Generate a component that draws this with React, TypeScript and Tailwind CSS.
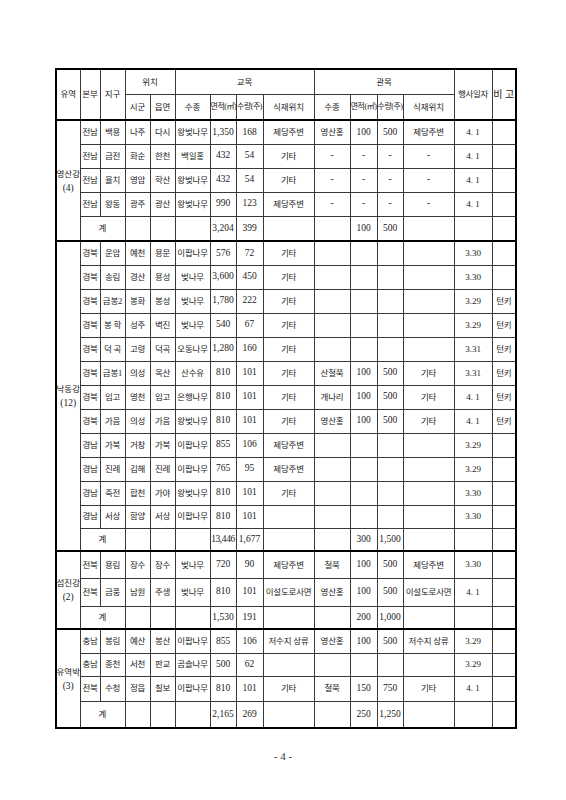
import React from 'react';

type Row = { c: string[]; h: number; total?: boolean };
type Group = { name: string; count: string; rows: Row[] };

const E = '';

const groups: Group[] = [
    {
        name: '영산강',
        count: '(4)',
        rows: [
            { h: 24, c: ['전남', '백용', '나주', '다시', '왕벚나무', '1,350', '168', '제당주변', '영산홍', '100', '500', '제당주변', '4. 1', E] },
            { h: 24, c: ['전남', '금전', '화순', '한천', '백일홍', '432', '54', '기타', '-', '-', '-', '-', '4. 1', E] },
            { h: 24, c: ['전남', '율치', '영암', '학산', '왕벚나무', '432', '54', '기타', '-', '-', '-', '-', '4. 1', E] },
            { h: 24, c: ['전남', '왕동', '광주', '광산', '왕벚나무', '990', '123', '제당주변', '-', '-', '-', '-', '4. 1', E] },
            { h: 25, total: true, c: ['계', E, E, E, '3,204', '399', E, E, '100', '500', E, E, E] },
        ],
    },
    {
        name: '낙동강',
        count: '(12)',
        rows: [
            { h: 24, c: ['경북', '운암', '예천', '용문', '이팝나무', '576', '72', '기타', E, E, E, E, '3.30', E] },
            { h: 24, c: ['경북', '송림', '경산', '용성', '벚나무', '3,600', '450', '기타', E, E, E, E, '3.30', E] },
            { h: 24, c: ['경북', '금봉2', '봉화', '봉성', '벚나무', '1,780', '222', '기타', E, E, E, E, '3.29', '턴키'] },
            { h: 24, c: ['경북', '봉 학', '성주', '벽진', '벚나무', '540', '67', '기타', E, E, E, E, '3.29', '턴키'] },
            { h: 24, c: ['경북', '덕 곡', '고령', '덕곡', '오동나무', '1,280', '160', '기타', E, E, E, E, '3.31', '턴키'] },
            { h: 24, c: ['경북', '금봉1', '의성', '옥산', '산수유', '810', '101', '기타', '산철쭉', '100', '500', '기타', '3.31', '턴키'] },
            { h: 24, c: ['경북', '임고', '영천', '임고', '은행나무', '810', '101', '기타', '개나리', '100', '500', '기타', '4. 1', '턴키'] },
            { h: 24, c: ['경북', '가음', '의성', '가음', '왕벚나무', '810', '101', '기타', '영산홍', '100', '500', '기타', '4. 1', '턴키'] },
            { h: 24, c: ['경남', '가북', '거창', '가북', '이팝나무', '855', '106', '제당주변', E, E, E, E, '3.29', E] },
            { h: 24, c: ['경남', '진례', '김해', '진례', '이팝나무', '765', '95', '제당주변', E, E, E, E, '3.29', E] },
            { h: 24, c: ['경남', '죽전', '합천', '가야', '왕벚나무', '810', '101', '기타', E, E, E, E, '3.30', E] },
            { h: 23, c: ['경남', '서상', '함양', '서상', '이팝나무', '810', '101', E, E, E, E, E, '3.30', E] },
            { h: 23, total: true, c: ['계', E, E, E, '13,446', '1,677', E, E, '300', '1,500', E, E, E] },
        ],
    },
    {
        name: '섬진강',
        count: '(2)',
        rows: [
            { h: 27, c: ['전북', '용림', '장수', '장수', '벚나무', '720', '90', '제당주변', '철쭉', '100', '500', '제당주변', '3.30', E] },
            { h: 28, c: ['전북', '금풍', '남원', '주생', '벚나무', '810', '101', '이설도로사면', '영산홍', '100', '500', '이설도로사면', '4. 1', E] },
            { h: 23, total: true, c: ['계', E, E, E, '1,530', '191', E, E, '200', '1,000', E, E, E] },
        ],
    },
    {
        name: '유역박',
        count: '(3)',
        rows: [
            { h: 24, c: ['충남', '봉림', '예산', '봉산', '이팝나무', '855', '106', '저수지 상류', '영산홍', '100', '500', '저수지 상류', '3.29', E] },
            { h: 23, c: ['충남', '종천', '서천', '판교', '곰솔나무', '500', '62', E, E, E, E, E, '3.29', E] },
            { h: 25, c: ['전북', '수청', '정읍', '칠보', '이팝나무', '810', '101', '기타', '철쭉', '150', '750', '기타', '4. 1', E] },
            { h: 27, total: true, c: ['계', E, E, E, '2,165', '269', E, E, '250', '1,250', E, E, E] },
        ],
    },
];

const widths = [24, 20, 25, 25, 25, 35, 26, 27, 51, 36, 27, 26, 51, 38, 24];

const cell = 'border border-[#3a3a3a] text-center align-middle p-0 whitespace-nowrap overflow-visible';

// Hangul text is set smaller than the serif figures, as in the printed page
const size = (t: string) =>
    /[가-힣]/.test(t) ? ' text-[8.5px] tracking-[-0.2px]' : t.length > 5 ? ' text-[9.5px] tracking-[-0.4px]' : ' text-[9.5px]';

// columns whose left rule is lighter (지구, 수종)
const lightLeft = (col: number) => (col === 2 || col === 5 ? ' border-l-[#8a8a8a]' : '');

const App: React.FC = () => {
    return (
        <div
            className="w-[566px] h-[800px] bg-white text-[#222] leading-none"
            style={{ fontFamily: '"Liberation Serif", "Noto Sans CJK KR", serif' }}
        >
            <div className="pt-[68px] pl-[55px]">
                <table className="table-fixed border-collapse border-2 border-black w-[460px]">
                    <colgroup>
                        {widths.map((w, i) => (
                            <col key={i} style={{ width: w }} />
                        ))}
                    </colgroup>
                    <thead>
                        <tr className="h-[25px]">
                            <th rowSpan={2} className={`${cell} font-normal text-[8.5px]`}>유역</th>
                            <th rowSpan={2} className={`${cell} font-normal text-[8.5px]`}>본부</th>
                            <th rowSpan={2} className={`${cell} font-normal text-[8.5px] border-l-[#8a8a8a]`}>지구</th>
                            <th colSpan={2} className={`${cell} font-normal text-[8.5px]`}>위치</th>
                            <th colSpan={4} className={`${cell} font-normal text-[8.5px] border-l-[#8a8a8a]`}>교목</th>
                            <th colSpan={4} className={`${cell} font-normal text-[8.5px]`}>관목</th>
                            <th rowSpan={2} className={`${cell} font-normal text-[8.5px] tracking-[-0.3px] border-b-2 border-b-black`}>
                                행사일자
                            </th>
                            <th rowSpan={2} className={`${cell} font-normal text-[10px] border-b-2 border-b-black`}>비 고</th>
                        </tr>
                        <tr className="h-[26px]">
                            {['시군', '읍면', '수종', '면적(㎡)', '수량(주)', '식재위치', '수종', '면적(㎡)', '수량(주)', '식재위치'].map((t, i) => (
                                <th
                                    key={i}
                                    className={`${cell} font-normal border-b-2 border-b-black${i === 2 ? ' border-l-[#8a8a8a]' : ''}${
                                        t.length > 4 ? ' text-[8px] tracking-[-0.5px]' : ' text-[8.5px]'
                                    }`}
                                >
                                    {t}
                                </th>
                            ))}
                        </tr>
                    </thead>
                    <tbody>
                        {groups.map((g) =>
                            g.rows.map((r, ri) => (
                                <tr key={g.name + ri} style={{ height: r.h }}>
                                    {ri === 0 && (
                                        <td
                                            rowSpan={g.rows.length}
                                            className={`${cell} text-[8.5px] border-t-2 border-t-black leading-[14px]`}
                                        >
                                            <div className="-mx-[2px]">{g.name}</div>
                                            <div className="text-[9.5px]">{g.count}</div>
                                        </td>
                                    )}
                                    {r.total ? (
                                        <>
                                            <td colSpan={2} className={`${cell} text-[8.5px]`}>
                                                {r.c[0]}
                                            </td>
                                            {r.c.slice(1).map((t, i) => (
                                                <td key={i} className={`${cell}${lightLeft(i + 3)}${size(t)}`}>
                                                    {t}
                                                </td>
                                            ))}
                                        </>
                                    ) : (
                                        r.c.map((t, i) => (
                                            <td
                                                key={i}
                                                className={`${cell}${lightLeft(i + 1)}${ri === 0 ? ' border-t-2 border-t-black' : ''}${
                                                    i === 12 ? ' text-[9px]' : size(t)
                                                }`}
                                            >
                                                {t}
                                            </td>
                                        ))
                                    )}
                                </tr>
                            ))
                        )}
                    </tbody>
                </table>
            </div>
            <p className="mt-[22px] text-center text-[11px] text-[#333]">- 4 -</p>
        </div>
    );
};

export default App;
